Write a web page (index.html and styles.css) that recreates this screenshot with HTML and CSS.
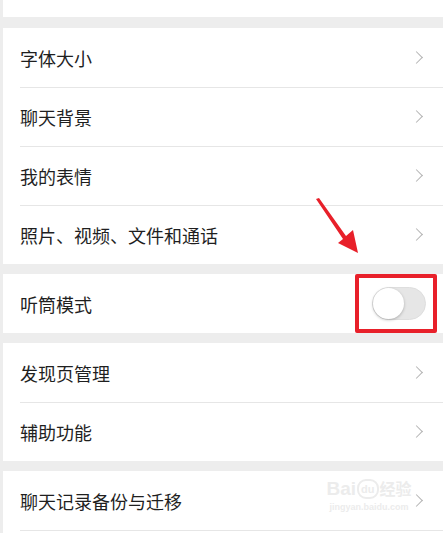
FILE: index.html
```html
<!DOCTYPE html>
<html lang="zh-CN">
<head>
    <meta charset="UTF-8">
    <meta name="viewport" content="width=device-width, initial-scale=1.0">
    <title>设置</title>
    <link rel="stylesheet" href="styles.css">
</head>
<body>
    <div class="page">
        <div class="top-blank"></div>

        <div class="group">
            <div class="row"><span class="label">字体大小</span><span class="chevron"></span></div>
            <div class="row"><span class="label">聊天背景</span><span class="chevron"></span></div>
            <div class="row"><span class="label">我的表情</span><span class="chevron"></span></div>
            <div class="row"><span class="label">照片、视频、文件和通话</span><span class="chevron"></span></div>
        </div>

        <div class="group">
            <div class="row">
                <span class="label">听筒模式</span>
                <span class="switch-mark">
                    <span class="switch"><span class="knob"></span></span>
                </span>
            </div>
        </div>

        <div class="group">
            <div class="row"><span class="label">发现页管理</span><span class="chevron"></span></div>
            <div class="row"><span class="label">辅助功能</span><span class="chevron"></span></div>
        </div>

        <div class="group">
            <div class="row"><span class="label">聊天记录备份与迁移</span><span class="chevron"></span></div>
            <div class="row"></div>
        </div>

        <!-- annotation arrow pointing at the switch -->
        <svg class="arrow" width="443" height="533" viewBox="0 0 443 533">
            <polygon points="316,199 319,198 346,236 353,230 358,253 338,243 343,239" fill="#e8202a"/>
        </svg>

        <div class="watermark">
            <div class="wm-logo"><span class="wm-bai">Bai</span><span class="wm-du">du</span><span class="wm-jy">经验</span></div>
            <div class="wm-url">jingyan.baidu.com</div>
        </div>
    </div>
</body>
</html>
```

FILE: styles.css
```css
html, body {
    margin: 0;
    padding: 0;
}
body {
    background-color: #ededed;
    font-family: "Noto Sans CJK SC", "Noto Sans", sans-serif;
    color: #1f1f1f;
}
.page {
    position: relative;
    width: 443px;
    height: 533px;
    overflow: hidden;
    padding-left: 3px;
    box-sizing: border-box;
}
.top-blank {
    height: 17px;
    background-color: #fff;
    margin-bottom: 11px;
}
.group {
    background-color: #fff;
    margin-bottom: 10px;
}
.row {
    height: 59px;
    display: flex;
    align-items: center;
    justify-content: space-between;
    padding-left: 17px;
    padding-right: 20px;
    box-sizing: border-box;
    position: relative;
}
.row + .row::before {
    content: "";
    position: absolute;
    top: 0;
    left: 17px;
    right: 0;
    height: 1px;
    background-color: #e6e6e6;
}
.label {
    font-size: 18px;
    line-height: 1;
}
.chevron {
    width: 8px;
    height: 8px;
    border-top: 1.5px solid #b3b3b3;
    border-right: 1.5px solid #b3b3b3;
    transform: rotate(45deg);
    margin-right: 2px;
}

/* switch with red highlight box */
.switch-mark {
    width: 82px;
    height: 59px;
    box-sizing: border-box;
    border: 4px solid #e8202a;
    border-radius: 2px;
    display: flex;
    align-items: center;
    justify-content: flex-end;
    padding-right: 7px;
    margin-right: -14px;
}
.switch {
    width: 54px;
    height: 33px;
    box-sizing: border-box;
    border-radius: 17px;
    background-color: #e6e6e6;
    border: 1px solid #dedede;
    position: relative;
}
.knob {
    position: absolute;
    top: 0;
    left: 0;
    width: 31px;
    height: 31px;
    border-radius: 50%;
    background-color: #fff;
    box-shadow: 0 1px 3px rgba(0,0,0,0.25);
}

.arrow {
    position: absolute;
    top: 0;
    left: 0;
    pointer-events: none;
}

.watermark {
    position: absolute;
    left: 323px;
    top: 478px;
    width: 92px;
    text-align: center;
    color: #ececec;
    font-family: "Liberation Sans", "Noto Sans CJK SC", sans-serif;
}
.wm-logo {
    font-size: 19px;
    font-weight: bold;
    line-height: 22px;
}
.wm-du {
    display: inline-block;
    font-size: 11px;
    line-height: 16px;
    padding: 0 2px;
    border: 2px solid #ececec;
    border-radius: 9px;
    margin: 0 1px;
    vertical-align: 2px;
}
.wm-jy {
    font-size: 16px;
}
.wm-url {
    font-size: 9px;
    line-height: 12px;
    font-weight: bold;
}
```
